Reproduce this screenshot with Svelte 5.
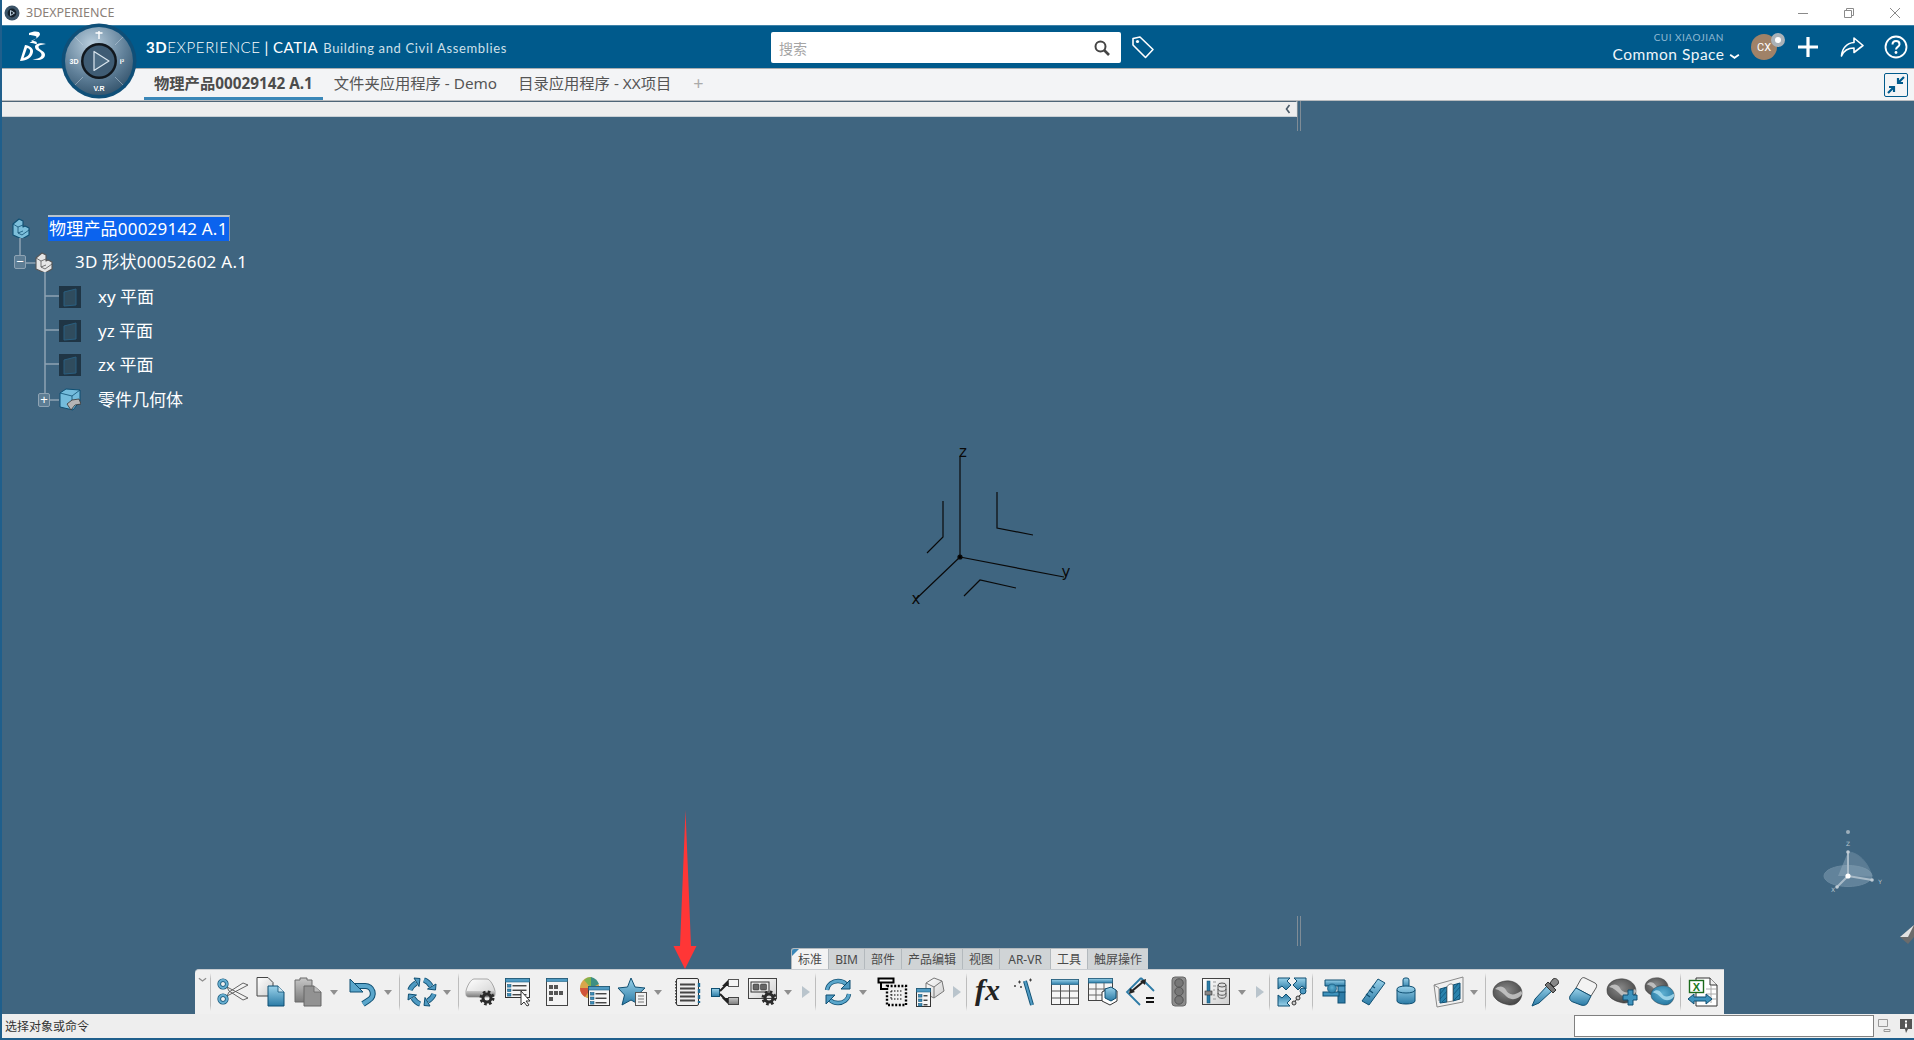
<script lang="ts">
	const treeRows = [
		{ label: 'xy 平面' },
		{ label: 'yz 平面' },
		{ label: 'zx 平面' }
	];
	const dockTabs = [
		{ label: '标准', cls: 'first' },
		{ label: 'BIM', cls: '' },
		{ label: '部件', cls: '' },
		{ label: '产品编辑', cls: '' },
		{ label: '视图', cls: '' },
		{ label: 'AR-VR', cls: 'wide' },
		{ label: '工具', cls: 'light' },
		{ label: '触屏操作', cls: '' }
	];
</script>

{#snippet dd()}
	<div class="dd"><i></i></div>
{/snippet}
{#snippet more()}
	<div class="more"><i></i></div>
{/snippet}
{#snippet gear(x, y)}
	<g transform="translate({x} {y})">
		<circle r="4" fill="none" stroke="#2b2b2b" stroke-width="3" />
		<circle r="6.2" fill="none" stroke="#2b2b2b" stroke-width="2.6" stroke-dasharray="2.6 2.27" />
	</g>
{/snippet}
{#snippet listwin(x, y, w, h)}
	<g transform="translate({x} {y})">
		<rect x=".5" y=".5" width={w} height={h} fill="#f6f6f6" stroke="#333" />
		<rect x=".5" y=".5" width={w} height="3.5" fill="#4f9ac2" stroke="#1d5f82" stroke-width=".6" />
		{#each [6.5, 11, 15.5] as ry}
			{#if ry < h - 1}
				<rect x="2.5" y={ry} width="3.5" height="2.6" fill="#3b8cb8" stroke="#0e4f72" stroke-width=".5" />
				<rect x="7.5" y={ry + 0.6} width={w - 10} height="1.3" fill="#333" />
			{/if}
		{/each}
	</g>
{/snippet}
{#snippet blob(x, y, fill, band)}
	<g transform="translate({x} {y})">
		<path d="M0 11C1 4 9 0 17 1c7 1 12 6 12 12 0 7-6 13-13 12-5-1-11-3-14-7-2-2-2-4-2-7z" fill={fill} stroke="#333" stroke-width=".5" />
		<path d="M2 9c4-4 9-3 11 1s7 7 15 1c1 1 1 2 1 3-3 5-10 7-15 3C10 13 7 10 2 9z" fill={band} opacity=".85" />
	</g>
{/snippet}
{#snippet lblock(face, edge)}
	<path d="M1 6l6-5 4 2v6l2-1 4 2v7l-7 4-9-4z" fill={face} stroke={edge} stroke-width="1.100" stroke-linejoin="round" />
	<path d="M1 6l5 3v6l4 2 7-5M6 9l5-2M6 15l5-2" fill="none" stroke={edge} stroke-width=".8" />
{/snippet}

<svg class="defs" width="0" height="0" aria-hidden="true">
	<defs>
		<linearGradient id="bl" x1="0" y1="0" x2="0" y2="1">
			<stop offset="0" stop-color="#9ad2ea" />
			<stop offset="1" stop-color="#2b7ba6" />
		</linearGradient>
		<linearGradient id="gr" x1="0" y1="0" x2="0" y2="1">
			<stop offset="0" stop-color="#c8c8c8" />
			<stop offset="1" stop-color="#7b7b7b" />
		</linearGradient>
		<linearGradient id="wh" x1="0" y1="0" x2="1" y2="1">
			<stop offset="0" stop-color="#fff" />
			<stop offset="1" stop-color="#cfcfcf" />
		</linearGradient>
		<radialGradient id="metal" cx=".4" cy=".25" r=".9">
			<stop offset="0" stop-color="#b9cedd" />
			<stop offset=".55" stop-color="#5f7f98" />
			<stop offset="1" stop-color="#24435b" />
		</radialGradient>
		<radialGradient id="blobg" cx=".45" cy=".4" r=".7">
			<stop offset="0" stop-color="#8a8a8a" />
			<stop offset="1" stop-color="#3e3e3e" />
		</radialGradient>
		<radialGradient id="blobb" cx=".5" cy=".4" r=".7">
			<stop offset="0" stop-color="#5fb0d2" />
			<stop offset="1" stop-color="#1d6f9a" />
		</radialGradient>
	</defs>
</svg>

<div class="app">
	<div class="titlebar">
		<svg class="appicon" viewBox="0 0 16 16" width="16" height="16">
			<circle cx="8" cy="8" r="7.5" fill="#3c5468" />
			<circle cx="8" cy="8" r="4.4" fill="#14202b" />
			<path d="M6.500 5.500v5l4-2.500z" fill="none" stroke="#b9cedd" />
		</svg>
		<span class="apptitle">3DEXPERIENCE</span>
		<div class="winbtns">
			<svg viewBox="0 0 12 12" width="12" height="12"><path d="M1 6.500h10" stroke="#8a8a8a" /></svg>
			<svg viewBox="0 0 12 12" width="12" height="12"><path d="M1.500 3.500h7v7h-7zM3.500 3.500v-2h7v7h-2" fill="none" stroke="#8a8a8a" /></svg>
			<svg viewBox="0 0 12 12" width="12" height="12"><path d="M1 1l10 10M11 1L1 11" stroke="#8a8a8a" /></svg>
		</div>
	</div>

	<header class="hdr">
		<svg class="ds" viewBox="0 0 30 32" width="30" height="32">
			<path d="M12 3c4-2 11-2.500 11 1 0 3-5 5-9 7 4-.5 7 .5 5.500 3.500-3-2-7-1.500-7-1.500 3-2 6-3.500 7-5.500 .5-2-4-2-7.500-2.500z" fill="#fff" />
			<path d="M8 15l-5 16c7 0 12-3.500 13-9 .5-4-3.500-6.500-8-7zM10 18c2.500 .5 3.500 2 3 4-.5 3-3 5-6.500 6z" fill="#fff" fill-rule="evenodd" />
			<path d="M29 14c-5-1.500-11-.5-11 3 0 4 7 4 6.500 8-.5 3-5 4.500-9 4 6 2.500 12 .5 12.500-4 .5-4-6.500-5-6.500-8 0-2 4-2.500 7.500-3z" fill="#fff" />
		</svg>
		<div class="brand">
			<b>3D</b><span class="thin">EXPERIENCE</span><span class="bar">|</span><span class="cat">CATIA</span>
			<span class="sub">Building and Civil Assemblies</span>
		</div>
		<div class="search">
			<span>搜索</span>
			<svg viewBox="0 0 18 18" width="18" height="18">
				<circle cx="7.500" cy="7.500" r="5" fill="none" stroke="#444" stroke-width="2" />
				<path d="M11 11l5 5" stroke="#444" stroke-width="2.600" />
			</svg>
		</div>
		<svg class="tag" viewBox="0 0 24 24" width="24" height="24">
			<path d="M2 3.500 9 2l13 12.500-7.500 8L2 10z" fill="none" stroke="#fff" stroke-width="1.600" stroke-linejoin="round" />
			<circle cx="6.500" cy="6.500" r="1.600" fill="#fff" />
		</svg>
		<div class="user">
			<div class="who">
				<span class="uname">CUI XIAOJIAN</span>
				<span class="space">Common Space
					<svg viewBox="0 0 12 8" width="11" height="7"><path d="M1 2l5 3.500L11 2" fill="none" stroke="#fff" stroke-width="2" /></svg>
				</span>
			</div>
			<div class="avatar">CX<i></i></div>
			<svg class="act plus" viewBox="0 0 22 22" width="22" height="22"><path d="M11 1v20M1 11h20" stroke="#fff" stroke-width="3.200" /></svg>
			<svg class="act" viewBox="0 0 24 22" width="24" height="22"><path d="M14 2l9 7.500-9 7v-4.500C8 12 4 14 1.500 20 2 12 7 7 14 6.500z" fill="none" stroke="#fff" stroke-width="1.600" stroke-linejoin="round" /></svg>
			<svg class="act" viewBox="0 0 24 24" width="24" height="24">
				<circle cx="12" cy="12" r="10.500" fill="none" stroke="#fff" stroke-width="1.800" />
				<path d="M8.500 9.500C8.500 7 10 6 12 6s3.500 1.200 3.500 3.200c0 2.800-3.500 2.600-3.500 5.300" fill="none" stroke="#fff" stroke-width="2" />
				<circle cx="12" cy="17.500" r="1.400" fill="#fff" />
			</svg>
		</div>
	</header>

	<svg class="compass" viewBox="0 0 76 76" width="76" height="76">
		<circle cx="38" cy="38" r="37.500" fill="#0f4f78" />
		<circle cx="38" cy="38" r="34" fill="url(#metal)" />
		<g stroke="#c7d6e2" stroke-width=".7" opacity=".7">
			<path d="M14 14l8 8M62 14l-8 8M14 62l8-8M62 62l-8-8" />
		</g>
		<circle cx="38" cy="38" r="18" fill="#11171d" />
		<circle cx="38" cy="38" r="15.500" fill="#3f5c74" />
		<path d="M33 28.500v19L48 38z" fill="#4e6d85" stroke="#dbe6ee" stroke-width="1.200" stroke-linejoin="round" />
		<text x="13" y="41" class="ct">3D</text>
		<text x="61" y="41" class="ct">i²</text>
		<text x="38" y="68" class="ct">V.R</text>
		<path d="M38 8v8M34.500 10h7" stroke="#fff" stroke-width="1.400" />
	</svg>

	<nav class="tabs">
		<span class="tab active">物理产品00029142 A.1</span>
		<span class="tab">文件夹应用程序 - Demo</span>
		<span class="tab">目录应用程序 - XX项目</span>
		<span class="add">+</span>
		<div class="collapse">
			<svg viewBox="0 0 20 20" width="20" height="20">
				<path d="M12 8l6-6M12 3v5h5M8 12l-6 6M3 12h5v5" fill="none" stroke="#005a8c" stroke-width="2.200" />
			</svg>
		</div>
	</nav>

	<main class="view">
		<div class="strip">
			<svg viewBox="0 0 8 10" width="8" height="10"><path d="M5.500 1L2.500 5l3 4" fill="none" stroke="#4a5a68" stroke-width="1.600" /></svg>
		</div>
		<i class="grip top"></i>
		<i class="grip low"></i>

		<svg class="links" width="60" height="200" viewBox="0 0 60 200">
			<g stroke="#8ea3b3" stroke-width="1.500" fill="none">
				<path d="M18 20v19M24 45h11M43 54v121M43 78h14M43 112h14M43 146h14M48 182h9" />
			</g>
		</svg>

		<div class="tree">
			<div class="row lv0">
				<svg class="node" viewBox="0 0 18 20" width="18" height="20">
					{@render lblock('#7dbfdb', '#0f4f72')}
				</svg>
				<span class="sel">物理产品00029142 A.1</span>
			</div>
			<div class="row lv1">
				<span class="box">−</span>
				<svg class="node" viewBox="0 0 18 20" width="18" height="20">
					{@render lblock('#e6e6e6', '#555')}
				</svg>
				<span class="txt">3D 形状00052602 A.1</span>
			</div>
			{#each treeRows as r}
				<div class="row lv2">
					<svg class="plane" viewBox="0 0 22 22" width="22" height="22">
						<rect width="22" height="22" fill="#1f3545" />
						<path d="M5 6l12-3v16l-12 1z" fill="#2f4c5e" stroke="#2a5f80" />
					</svg>
					<span class="txt">{r.label}</span>
				</div>
			{/each}
			<div class="row lv3">
				<span class="box">+</span>
				<svg class="plane" viewBox="0 0 22 24" width="22" height="24">
					<path d="M1 5l6-4 14 1v11l-7 9-13-3z" fill="#74bcdc" stroke="#0f4f72" />
					<path d="M1 5l12 3 8-6M13 8v14" fill="none" stroke="#0f4f72" stroke-width=".8" />
					<path d="M8 16l5-4 7-1 2 5-6 1-4 5z" fill="#b5b5b5" stroke="#333" stroke-width=".8" />
				</svg>
				<span class="txt">零件几何体</span>
			</div>
		</div>

		<svg class="axis" viewBox="0 0 170 170" width="170" height="170">
			<g fill="none" stroke="#0a0a0a" stroke-width="1.200" transform="translate(-900 -440)">
				<path d="M960 557V456M960 557l-44 42M960 557l104 20" />
				<path d="M943 501v36l-16 16M997 492v36l36 7M964 596l16-16 36 8" />
				<circle cx="960" cy="557" r="2" fill="#000" />
			</g>
			<text x="63" y="17" class="al">z</text>
			<text x="166" y="137" class="al">y</text>
			<text x="16" y="164" class="al">x</text>
		</svg>

		<svg class="triad" viewBox="0 0 60 70" width="60" height="70">
			<ellipse cx="30" cy="47" rx="24" ry="10.500" fill="#7f9db2" opacity=".55" stroke="#8aa5b8" />
			<path d="M30 23c10 0 20 10 24 24l-24 0z" fill="#8fa9bb" opacity=".35" stroke="#8aa5b8" />
			<path d="M30 23l-10 24h10z" fill="#98b0c0" opacity=".45" />
			<path d="M30 47V23M30 47l24 4M30 47l-11 11" stroke="#a9bbc8" stroke-width="2" fill="none" />
			<circle cx="30" cy="3" r="2" fill="#9eafbb" />
			<circle cx="30" cy="23" r="1.800" fill="#c0ccd5" />
			<circle cx="54" cy="51" r="1.800" fill="#c0ccd5" />
			<circle cx="19" cy="58" r="1.800" fill="#c0ccd5" />
			<circle cx="30" cy="47" r="2.600" fill="#fff" />
			<text x="30" y="17" class="tl">Z</text>
			<text x="62" y="55" class="tl">Y</text>
			<text x="15" y="63" class="tl">X</text>
		</svg>

		<svg class="pointer" viewBox="0 0 14 20" width="14" height="20">
			<path d="M0 12L14 0v12l-6 7z" fill="#6b6b6b" />
			<path d="M0 12L14 0 8 12z" fill="#e2e2e2" />
		</svg>

		<svg class="redarrow" viewBox="0 0 24 160" width="24" height="160">
			<path d="M7 136L12.500 0 18 136h5.500L12 159 .5 136z" fill="#ff3636" />
		</svg>

		<div class="dock">
			<div class="docktabs">
				{#each dockTabs as t}
					<span class="dtab {t.cls}">{t.label}</span>
				{/each}
			</div>
			<div class="toolbar">
				<div class="handle">
					<svg viewBox="0 0 10 6" width="9" height="6"><path d="M1 1l4 3 4-3" fill="none" stroke="#8d8d8d" stroke-width="1.400" /></svg>
				</div>
				<div class="sep"></div>

				<div class="b"><svg viewBox="0 0 30 30">
					<path d="M9 10L30 21l-5 2-14-9zM9 19L30 8l-5-2-14 9z" fill="#f3f3f3" stroke="#555" stroke-width=".9" />
					<circle cx="5" cy="7" r="3.800" fill="none" stroke="#0f4f72" stroke-width="3.600" />
					<circle cx="5" cy="7" r="3.800" fill="none" stroke="#66aed0" stroke-width="2.200" />
					<circle cx="5" cy="22" r="3.800" fill="none" stroke="#0f4f72" stroke-width="3.600" />
					<circle cx="5" cy="22" r="3.800" fill="none" stroke="#66aed0" stroke-width="2.200" />
				</svg></div>
				<div class="b"><svg viewBox="0 0 30 30">
					<path d="M1 .500h11l5 5V19H1z" fill="url(#wh)" stroke="#444" />
					<path d="M12 9h10l6 6v14H12z" fill="url(#bl)" stroke="#0f4f72" />
					<path d="M22 9v6h6" fill="#cfe8f3" stroke="#0f4f72" stroke-width=".8" />
				</svg></div>
				<div class="b"><svg viewBox="0 0 30 30">
					<path d="M1 3h5V1h7v2h5v22H1z" fill="url(#gr)" stroke="#6b6b6b" />
					<path d="M10 9h10l7 6v14H10z" fill="#929292" stroke="#666" />
					<path d="M20 9v6h7" fill="#bdbdbd" stroke="#666" stroke-width=".8" />
				</svg></div>
				{@render dd()}
				<div class="b"><svg viewBox="0 0 30 30">
					<path d="M3 9h14a7.500 7.500 0 0 1 4 14l-6 4" fill="none" stroke="#0f4f72" stroke-width="6" />
					<path d="M3 9h14a7.500 7.500 0 0 1 4 14l-6 4" fill="none" stroke="#5aa6cb" stroke-width="4" />
					<path d="M2 2v13h13z" fill="#5aa6cb" stroke="#0f4f72" />
				</svg></div>
				{@render dd()}
				<div class="sep"></div>

				<div class="b"><svg viewBox="0 0 30 30">
					{#each [0, 90, 180, 270] as a}
						<g transform="rotate({a} 15 15)">
							<path d="M3 13C4 10 6 8 9 6" fill="none" stroke="#0f4f72" stroke-width="5.400" />
							<path d="M3 13C4 10 6 8 9 6" fill="none" stroke="#4f9ac2" stroke-width="3.600" />
							<path d="M7 1l6 .500-1 8z" fill="#4f9ac2" stroke="#0f4f72" stroke-linejoin="round" />
						</g>
					{/each}
				</svg></div>
				{@render dd()}
				<div class="sep"></div>

				<div class="b"><svg viewBox="0 0 30 30">
					<path d="M8 2h13c3 0 7 7 8 12v3c0 2-1 3-3 3H3c-2 0-3-1-3-3v-3C1 9 5 2 8 2z" fill="url(#wh)" stroke="#777" stroke-width=".6" />
					<path d="M0 14h29v3c0 2-1 3-3 3H3c-2 0-3-1-3-3z" fill="url(#gr)" />
					{@render gear(21, 21)}
				</svg></div>
				<div class="b"><svg viewBox="0 0 30 30">
					{@render listwin(1, 1, 24, 19)}
					<path d="M17 14v14l3-3 3 4 2-1-3-4h4z" fill="#fff" stroke="#333" stroke-width="1" stroke-linejoin="round" />
				</svg></div>
				<div class="b"><svg viewBox="0 0 30 30">
					<rect x="4.500" y="1.500" width="21" height="27" fill="#f4f4f4" stroke="#444" />
					<rect x="4.500" y="1.500" width="21" height="3" fill="#4f9ac2" stroke="#1d5f82" stroke-width=".6" />
					{#each [[7, 8], [12, 8], [7, 14], [12, 14], [17, 14], [7, 20]] as c}
						<rect x={c[0]} y={c[1]} width="4" height="4" fill="#555" />
					{/each}
				</svg></div>
				<div class="b"><svg viewBox="0 0 30 30">
					<path d="M11 0a11 11 0 0 0-11 11 11 11 0 0 0 7 10h12V8z" fill="#d9a64a" />
					<path d="M11 0a11 11 0 0 0-7 3l7 8z" fill="#7fb24f" />
					<path d="M11 0l0 11 8-4a11 11 0 0 0-8-7z" fill="#3d8f83" />
					<path d="M0 11h11l-6 9a11 11 0 0 1-5-9z" fill="#d1553b" />
					{@render listwin(8, 9, 21, 19)}
				</svg></div>
				<div class="b"><svg viewBox="0 0 30 30">
					<path d="M13 1l4 9 10 1-7.500 7L22 28l-9-5-9 5 2.500-10L0 11l9.500-1z" fill="url(#bl)" stroke="#0f4f72" stroke-linejoin="round" />
					<rect x="17.500" y="15.500" width="11" height="13" fill="#f2f2f2" stroke="#555" />
					<path d="M20 19h6M20 22h6M20 25h6" stroke="#777" />
				</svg></div>
				{@render dd()}
				<div class="b"><svg viewBox="0 0 30 30">
					<rect x="4.500" y="1.500" width="22" height="27" rx="1.500" fill="#efefef" stroke="#333" />
					<path d="M8 7.500h15M8 11.500h15M8 15.500h15M8 19.500h15M8 23.500h15" stroke="#444" stroke-width="1.800" />
					<path d="M27 6v4M27 12v4M27 18v4M27 24v2" stroke="#1d6b95" stroke-width="2.400" />
					<path d="M4 4v23" stroke="#333" stroke-dasharray="1.500 1.500" stroke-width="1.600" />
				</svg></div>
				<div class="b"><svg viewBox="0 0 30 30">
					<rect x="1.500" y="11.500" width="8" height="8" fill="url(#bl)" stroke="#0f4f72" />
					<rect x="18.500" y="2.500" width="10" height="7" fill="#f6f6f6" stroke="#555" />
					<rect x="18.500" y="20.500" width="10" height="7" fill="url(#gr)" stroke="#444" />
					<path d="M10 14l8-8M10 17l8 8" stroke="#222" stroke-width="2" />
					<path d="M18 3v6h-6zM18 27v-6h-6z" fill="#222" />
				</svg></div>
				<div class="b"><svg viewBox="0 0 30 30">
					<rect x=".500" y="1.500" width="28" height="20" fill="url(#wh)" stroke="#444" />
					<rect x="3" y="5" width="18" height="10" fill="none" stroke="#333" />
					<rect x="5" y="7" width="6" height="6" rx="1" fill="#666" stroke="#222" stroke-width=".5" />
					<rect x="12.500" y="7" width="6" height="6" rx="1" fill="#666" stroke="#222" stroke-width=".5" />
					{@render gear(21, 21)}
				</svg></div>
				{@render dd()}
				{@render more()}
				<div class="sep"></div>

				<div class="b"><svg viewBox="0 0 30 30">
					<path d="M4 13c1-6 6-9 11-9 3 0 6 1 8 3" fill="none" stroke="#0f4f72" stroke-width="4.400" />
					<path d="M4 13c1-6 6-9 11-9 3 0 6 1 8 3" fill="none" stroke="#5aa6cb" stroke-width="2.800" />
					<path d="M26 17c-1 6-6 9-11 9-3 0-6-1-8-3" fill="none" stroke="#0f4f72" stroke-width="4.400" />
					<path d="M26 17c-1 6-6 9-11 9-3 0-6-1-8-3" fill="none" stroke="#5aa6cb" stroke-width="2.800" />
					<path d="M27 3v9h-9zM3 27v-9h9z" fill="#4f9ac2" stroke="#0f4f72" />
				</svg></div>
				{@render dd()}
				<div class="b"><svg viewBox="0 0 30 30">
					<rect x="1.500" y="1.500" width="15" height="4" fill="#fff" stroke="#000" stroke-width="2" />
					<path d="M4 6v6h6" fill="none" stroke="#000" stroke-width="2" />
					<rect x="10" y="9" width="19" height="19" fill="none" stroke="#000" stroke-width="2.400" stroke-dasharray="2 1.600" />
					<path d="M14 14h11M14 18h11M14 22h11M14 14v9" stroke="#000" stroke-dasharray="1.500 1.500" fill="none" />
				</svg></div>
				<div class="b"><svg viewBox="0 0 30 30">
					<path d="M11 6l8-5 8 3 2 10-10 7-8-4z" fill="url(#wh)" stroke="#777" />
					<path d="M11 6l8 4 8-6M19 10v11" fill="none" stroke="#777" />
					{@render listwin(1, 11, 14, 18)}
				</svg></div>
				{@render more()}
				<div class="sep"></div>

				<div class="b"><svg viewBox="0 0 30 30"><text x="1" y="23" class="fx">fx</text></svg></div>
				<div class="b wand"><svg viewBox="0 0 30 30">
					<path d="M16 4l7 24" stroke="#0f4f72" stroke-width="4" />
					<path d="M16 4l7 24" stroke="#4f9ac2" stroke-width="2.200" />
					<path d="M9 5h3M10.500 3.500v3M20 3h3M21.500 1.500v3M5 9h2M6 8v2M11 10h2M12 9v2" stroke="#333" stroke-width=".9" />
				</svg></div>
				<div class="b"><svg viewBox="0 0 30 30">
					<rect x="1.500" y="2.500" width="27" height="25" fill="#f5f5f5" stroke="#444" />
					<rect x="1.500" y="2.500" width="27" height="5" fill="url(#bl)" stroke="#1d5f82" stroke-width=".7" />
					<path d="M10.500 8v19M19.500 8v19M2 14h26M2 21h26" stroke="#555" />
				</svg></div>
				<div class="b"><svg viewBox="0 0 30 30">
					<rect x=".500" y="1.500" width="24" height="22" fill="#f5f5f5" stroke="#444" />
					<rect x=".500" y="1.500" width="24" height="4.500" fill="url(#bl)" stroke="#1d5f82" stroke-width=".7" />
					<path d="M8 6v17M16 6v17M1 12h23M1 18h23" stroke="#666" />
					<path d="M14 15l8-4 7 3v10l-7 4-8-4z" fill="#fff" stroke="#333" />
					<path d="M17 12l6-2 5 3v8l-5 3-6-3z" fill="url(#bl)" stroke="#0f4f72" />
				</svg></div>
				<div class="b"><svg viewBox="0 0 30 30">
					<path d="M15 1L1 15l13 13M15 1l13 13" fill="none" stroke="#2d7ba6" stroke-width="1.800" />
					<path d="M6 14L18 4" stroke="#222" stroke-width="2.200" />
					<path d="M20 2l-1 6-5-4zM3 17l1-6 5 4z" fill="#222" />
					<path d="M20 21h8M20 25h8" stroke="#111" stroke-width="2.200" />
				</svg></div>
				<div class="b"><svg viewBox="0 0 30 30">
					<rect x="8" y="0" width="14" height="29" rx="3" fill="#8c8c8c" stroke="#666" />
					<circle cx="15" cy="6" r="4.200" fill="#777" stroke="#555" />
					<circle cx="15" cy="14.500" r="4.200" fill="#777" stroke="#555" />
					<circle cx="15" cy="23" r="4.200" fill="#777" stroke="#555" />
				</svg></div>
				<div class="b"><svg viewBox="0 0 30 30">
					<rect x=".500" y="1.500" width="27" height="26" fill="url(#wh)" stroke="#444" />
					<rect x="5" y="4" width="3" height="22" fill="#2d7ba6" stroke="#0f4f72" stroke-width=".5" />
					<rect x="3" y="14" width="7" height="4" fill="#888" stroke="#333" stroke-width=".6" />
					<path d="M11 5h3M11 9h3M11 13h2M11 18h2M11 22h3" stroke="#999" />
					<ellipse cx="20" cy="8" rx="4" ry="2" fill="#ddd" stroke="#555" />
					<path d="M16 8v11c0 3 8 3 8 0V8M16 12c0 3 8 3 8 0M16 16c0 3 8 3 8 0" fill="none" stroke="#555" />
				</svg></div>
				{@render dd()}
				{@render more()}
				<div class="sep"></div>

				<div class="b"><svg viewBox="0 0 30 30">
					<path id="fastarrow" d="M1 1h12l-3 3 4 4-5 5-4-4-4 3z" fill="url(#bl)" stroke="#0f4f72" stroke-linejoin="round" />
					<path transform="translate(30 0) scale(-1 1)" d="M1 1h12l-3 3 4 4-5 5-4-4-4 3z" fill="url(#bl)" stroke="#0f4f72" stroke-linejoin="round" />
					<path transform="translate(0 30) scale(1 -1)" d="M1 1h12l-3 3 4 4-5 5-4-4-4 3z" fill="url(#bl)" stroke="#0f4f72" stroke-linejoin="round" />
					<path d="M17 26l4-6 6-6" stroke="#444" />
					<circle cx="26" cy="14" r="3" fill="#4f9ac2" stroke="#0f4f72" />
					<circle cx="21" cy="21" r="2" fill="#ccc" stroke="#333" />
					<circle cx="17" cy="26" r="2" fill="#ccc" stroke="#333" />
				</svg></div>
				<div class="sep"></div>

				<div class="b"><svg viewBox="0 0 30 30">
					<rect x="18" y="15" width="7" height="11" fill="#2d7ba6" stroke="#0f4f72" />
					<path d="M5 3h20v6h-20z" fill="url(#bl)" stroke="#0f4f72" />
					<rect x="18" y="9" width="7" height="6" fill="#4f9ac2" stroke="#0f4f72" />
					<rect x="3" y="15" width="16" height="4" fill="#3f93bd" stroke="#0f4f72" />
					<circle cx="12" cy="11.500" r="4.500" fill="url(#blobb)" stroke="#0f4f72" stroke-width=".6" />
				</svg></div>
				<div class="b"><svg viewBox="0 0 30 30">
					<path d="M20 2l7 4-16 22-7-4z" fill="url(#bl)" stroke="#0f4f72" />
					<path d="M11 13l4 3M14 9l3 2M8 17l4 3" stroke="#0f4f72" stroke-width="1.200" />
				</svg></div>
				<div class="b cyl"><svg viewBox="0 0 30 30">
					<rect x="12" y="1" width="6" height="10" rx="2" fill="url(#bl)" stroke="#0f4f72" />
					<path d="M6 12c0-4 18-4 18 0v12c0 4-18 4-18 0z" fill="url(#bl)" stroke="#0f4f72" />
					<path d="M6 13c0 4 18 4 18 0" fill="none" stroke="#0f4f72" />
				</svg></div>
				<div class="b"><svg viewBox="0 0 30 30">
					<path d="M0 8l29-8v25L3 30z" fill="none" stroke="#8a8a8a" stroke-width="1" />
					<path d="M0 8l5 3v13" fill="none" stroke="#8a8a8a" />
					<path d="M6 12l7-2v15l-7 1zM19 8l7-2v16l-7 2z" fill="#2b83ad" stroke="#0f4f72" />
					<path d="M6 17l5-6M6 22l7-8M8 25l5-5M19 13l5-6M19 18l7-8M20 23l6-6" stroke="#0f4f72" stroke-width=".7" />
					<path d="M13 10c1-3 5-4 6-2v16l-6 1z" fill="#fff" stroke="#555" stroke-width=".7" />
				</svg></div>
				{@render dd()}
				<div class="sep"></div>

				<div class="b"><svg viewBox="0 0 30 30">{@render blob(0, 3, 'url(#blobg)', '#c9c9c9')}</svg></div>
				<div class="b"><svg viewBox="0 0 30 30">
					<path d="M1 29l3-7L17 8l5 5-14 13z" fill="url(#bl)" stroke="#0f4f72" />
					<path d="M14 8l8 8 3-3-8-8z" fill="#777" stroke="#333" />
					<path d="M19 6l3-4c3-2 7 2 5 5l-4 3z" fill="#888" stroke="#333" />
				</svg></div>
				<div class="b"><svg viewBox="0 0 30 30">
					<path d="M16 1l10 5c2 1 2 3 1 5l-5 8-15-8 5-9c1-1 2-2 4-1z" fill="#f3f3f3" stroke="#333" stroke-width=".8" />
					<path d="M7 11l15 8-3 6c-1 3-4 4-7 3l-8-3c-3-1-4-3-3-6z" fill="url(#bl)" stroke="#0f4f72" />
				</svg></div>
				<div class="b"><svg viewBox="0 0 30 30">
					{@render blob(0, 1, 'url(#blobg)', '#c9c9c9')}
					<path d="M21 13h5v5h4v5h-4v5h-5v-5h-5v-5h5z" fill="#3f93bd" stroke="#0f4f72" />
				</svg></div>
				<div class="b"><svg viewBox="0 0 30 30">
					<g transform="scale(.8)">{@render blob(0, 0, 'url(#blobg)', '#c9c9c9')}</g>
					<g transform="translate(6 8) scale(.8)">{@render blob(0, 0, 'url(#blobb)', '#a8dcef')}</g>
				</svg></div>
				<div class="sep"></div>

				<div class="b"><svg viewBox="0 0 30 30">
					<path d="M8 1h14l7 7v21H8z" fill="#fff" stroke="#333" />
					<path d="M22 1v7h7" fill="#eee" stroke="#333" />
					<path d="M18 12h10M18 17h10M18 22h10M23 9v17" stroke="#aaa" />
					<rect x="1.500" y="3.500" width="14" height="12" fill="#fff" stroke="#1c6b1c" stroke-width="1.400" />
					<text x="8.500" y="14" class="xl">X</text>
					<path d="M0 22l6-5v3h12v-3l6 5-6 5v-3H6v3z" fill="#3f93bd" stroke="#0f4f72" />
				</svg></div>
			</div>
		</div>
	</main>

	<footer class="status">
		<span class="msg">选择对象或命令</span>
		<div class="cmd"></div>
		<svg viewBox="0 0 14 14" width="14" height="14"><path d="M.5.500h9v7h-9zM6 10.500h6v2H6z" fill="none" stroke="#999" /></svg>
		<svg viewBox="0 0 14 16" width="14" height="16"><path d="M1 1h12v10H9l-2 4-1-4H1z" fill="#555" /><rect x="6" y="2.500" width="2" height="2" fill="#fff" /><rect x="6" y="5.500" width="2" height="4" fill="#fff" /></svg>
	</footer>
</div>

<style>
	:global(body) {
		margin: 0;
		overflow: hidden;
	}

	.defs {
		position: absolute;
	}

	.app {
		position: relative;
		display: flex;
		flex-direction: column;
		width: 1914px;
		height: 1040px;
		box-sizing: border-box;
		border-left: 2px solid #1f5f8c;
		border-bottom: 2px solid #1f5f8c;
		font-family: 'Noto Sans', 'Noto Sans CJK SC', sans-serif;
		overflow: hidden;
	}

	.titlebar {
		display: flex;
		align-items: center;
		height: 25px;
		flex: none;
		background: #fff;
	}

	.appicon {
		margin-left: 2px;
	}

	.apptitle {
		margin-left: 6px;
		font-size: 12.500px;
		color: #8a8078;
	}

	.winbtns {
		display: flex;
		gap: 34px;
		margin-left: auto;
		margin-right: 13px;
	}

	.hdr {
		display: flex;
		align-items: center;
		height: 43px;
		flex: none;
		background: #005a8c;
		border-top: 1px solid #3e82a8;
		box-sizing: border-box;
		color: #fff;
	}

	.ds {
		margin-left: 15px;
		margin-top: -2px;
		flex: none;
	}

	.brand {
		width: 625px;
		margin-left: 99px;
		margin-top: -1px;
		flex: none;
		font-family: Lato, 'Noto Sans', sans-serif;
		font-size: 15px;
		letter-spacing: 0.6px;
		white-space: nowrap;
	}

	.brand b {
		font-weight: 700;
	}

	.thin {
		font-weight: 300;
	}

	.bar {
		margin: 0 4px;
	}

	.cat {
		font-weight: 400;
	}

	.sub {
		margin-left: 1px;
		font-size: 13px;
		color: #cfe0ea;
		letter-spacing: 0.65px;
	}

	.search {
		display: flex;
		align-items: center;
		justify-content: space-between;
		width: 350px;
		height: 31px;
		flex: none;
		box-sizing: border-box;
		padding: 0 10px 0 8px;
		background: #fff;
		border-radius: 2px;
		font-size: 14px;
		color: #a5a5a5;
		margin-top: 1px;
	}

	.tag {
		margin-left: 10px;
		flex: none;
	}

	.user {
		display: flex;
		align-items: center;
		margin-left: auto;
	}

	.who {
		display: flex;
		flex-direction: column;
		align-items: flex-end;
		font-family: Lato, 'Noto Sans', sans-serif;
	}

	.uname {
		font-size: 10px;
		line-height: 13px;
		letter-spacing: 0.5px;
		color: #8fb9d3;
		margin-right: 16px;
	}

	.space {
		margin-top: 1px;
		font-size: 15.500px;
		line-height: 19px;
		letter-spacing: 0.5px;
		color: #eef5fa;
	}

	.avatar {
		position: relative;
		display: flex;
		align-items: center;
		justify-content: center;
		width: 26px;
		height: 26px;
		margin-left: 11px;
		border-radius: 50%;
		background: #a08268;
		font-family: Roboto, sans-serif;
		font-size: 11px;
	}

	.avatar i {
		position: absolute;
		top: -1px;
		right: -8px;
		width: 6px;
		height: 6px;
		border: 4px solid #aab2b8;
		border-radius: 50%;
		background: #fff;
	}

	.act {
		margin-left: 20px;
		flex: none;
	}

	.act.plus {
		margin-right: 1px;
	}

	.act:last-child {
		margin-right: 6px;
	}

	.compass {
		position: absolute;
		left: 59px;
		top: 23px;
	}

	.ct {
		font-family: 'Liberation Sans', sans-serif;
		font-size: 7px;
		font-weight: 700;
		fill: #fff;
		text-anchor: middle;
	}

	.tabs {
		display: flex;
		align-items: stretch;
		height: 33px;
		flex: none;
		box-sizing: border-box;
		padding-left: 142px;
		background: #f3f4f6;
		border-top: 1px solid #a9adb0;
		border-bottom: 1px solid #b9bcbf;
		font-size: 15.300px;
		color: #555;
	}

	.tab {
		display: flex;
		align-items: center;
		padding: 0 10px 5px;
		margin-right: 1px;
		white-space: nowrap;
	}

	.tab.active {
		font-weight: 700;
		color: #4c4c4c;
		border-bottom: 3px solid #3a87b8;
		padding-bottom: 2px;
	}

	.add {
		display: flex;
		align-items: center;
		margin-left: 11px;
		padding-bottom: 4px;
		font-size: 18px;
		color: #aaa;
	}

	.collapse {
		display: flex;
		align-items: center;
		justify-content: center;
		width: 22px;
		height: 22px;
		margin: 4px 6px 0 auto;
		border: 1px solid #005a8c;
		border-radius: 2px;
	}

	.view {
		position: relative;
		flex: 1;
		background: #3f6580;
		overflow: hidden;
	}

	.strip {
		display: flex;
		align-items: center;
		justify-content: flex-end;
		width: 1295px;
		height: 16px;
		padding-right: 4px;
		box-sizing: border-box;
		background: #eee;
		border-top: 1px solid #4f6577;
		border-right: 1px solid #e4e8ea;
		border-bottom: 1px solid #c9d0d5;
	}

	.grip {
		position: absolute;
		left: 1295px;
		width: 2px;
		height: 30px;
		border-left: 1px solid #7f8c96;
		border-right: 1px solid #7f8c96;
	}

	.grip.top {
		top: 0;
	}

	.grip.low {
		top: 815px;
	}

	.links {
		position: absolute;
		left: 0;
		top: 117px;
	}

	.tree {
		position: relative;
		margin-top: 94px;
		font-size: 17px;
		color: #fff;
		line-height: 24px;
	}

	.row {
		display: flex;
		align-items: center;
		height: 34.300px;
		white-space: nowrap;
	}

	.lv0 {
		padding-left: 10px;
	}

	.lv0 .sel {
		margin-left: 18px;
		padding: 0 1px;
		background: #0b63ee;
		border-top: 2px solid #b9c4cc;
		border-right: 1px solid #8c98a2;
		height: 24px;
		letter-spacing: 0.2px;
	}

	.lv1 {
		padding-left: 12px;
	}

	.lv1 .node {
		margin-left: 9px;
	}

	.lv1 .txt {
		margin-left: 22px;
		letter-spacing: 0.25px;
	}

	.lv2 {
		padding-left: 57px;
	}

	.lv2 .txt,
	.lv3 .txt {
		margin-left: 17px;
	}

	.lv3 {
		padding-left: 36px;
	}

	.lv3 .plane {
		margin-left: 9px;
	}

	.box {
		display: flex;
		align-items: center;
		justify-content: center;
		width: 10px;
		height: 12px;
		border: 1px solid #8ea3b3;
		border-radius: 2px;
		background: #5d7d94;
		font-family: 'Liberation Sans', sans-serif;
		font-size: 13px;
		line-height: 12px;
	}

	.node,
	.plane {
		flex: none;
	}

	.axis {
		position: absolute;
		left: 898px;
		top: 339px;
	}

	.al {
		font-family: 'DejaVu Sans', sans-serif;
		font-size: 15px;
		fill: #0a0a0a;
		text-anchor: middle;
	}

	.triad {
		position: absolute;
		left: 1816px;
		top: 728px;
		overflow: visible;
	}

	.tl {
		font-family: 'DejaVu Sans', sans-serif;
		font-size: 6px;
		fill: #b7c6d1;
		text-anchor: middle;
	}

	.pointer {
		position: absolute;
		right: 0;
		top: 824px;
	}

	.redarrow {
		position: absolute;
		left: 671px;
		top: 709px;
	}

	.dock {
		position: absolute;
		left: 193px;
		bottom: 0;
		display: flex;
		flex-direction: column;
		align-items: flex-start;
	}

	.docktabs {
		display: flex;
		margin-left: 596px;
		height: 21px;
	}

	.dtab {
		display: flex;
		align-items: center;
		justify-content: center;
		min-width: 36px;
		box-sizing: border-box;
		padding: 0 6px;
		background: #d0d4d6;
		border-left: 1px solid #b3b9bd;
		border-top: 1px solid #b3b9bd;
		font-size: 12px;
		color: #4a4a4a;
		white-space: nowrap;
	}

	.dtab.wide {
		min-width: 51px;
	}

	.dtab.first {
		position: relative;
		background: #f3f3f3;
		border-radius: 3px 0 0 0;
		overflow: hidden;
	}

	.dtab.first::before {
		content: '';
		position: absolute;
		left: 0;
		top: 0;
		border-top: 7px solid #3a87b8;
		border-right: 7px solid transparent;
	}

	.dtab.light {
		background: #ebebeb;
	}

	.toolbar {
		display: flex;
		align-items: center;
		height: 45px;
		box-sizing: border-box;
		width: 1529px;
		background: #f0f0f0;
		border-top: 1px solid #c8ccd0;
		border-radius: 4px 0 0 0;
	}

	.handle {
		display: flex;
		justify-content: center;
		width: 14px;
		align-self: flex-start;
		padding-top: 7px;
	}

	.sep {
		flex: none;
		width: 1px;
		height: 38px;
		margin: 0 3px 0 1px;
		background: linear-gradient(#f0f0f0, #bdbdbd 15%, #bdbdbd 85%, #f0f0f0);
	}

	.b {
		display: flex;
		align-items: center;
		justify-content: center;
		width: 38px;
		height: 30px;
		flex: none;
	}

	.b svg {
		width: 30px;
		height: 30px;
		overflow: visible;
	}

	.wand svg {
		margin-left: -6px;
	}

	.cyl svg {
		margin-left: -10px;
	}

	.dd {
		display: flex;
		align-items: center;
		width: 16px;
		flex: none;
		padding-left: 2px;
		box-sizing: border-box;
	}

	.dd i {
		border-top: 5px solid #8f8f8f;
		border-left: 4px solid transparent;
		border-right: 4px solid transparent;
	}

	.more {
		display: flex;
		justify-content: center;
		width: 16px;
		flex: none;
	}

	.more i {
		border-left: 8px solid #b9c4cc;
		border-top: 6px solid transparent;
		border-bottom: 6px solid transparent;
	}

	.fx {
		font-family: 'Liberation Serif', serif;
		font-style: italic;
		font-weight: 700;
		font-size: 30px;
		fill: #222;
	}

	.xl {
		font-family: 'Liberation Sans', sans-serif;
		font-weight: 700;
		font-size: 11px;
		fill: #1c7a1c;
		text-anchor: middle;
	}

	.status {
		display: flex;
		align-items: center;
		height: 24px;
		flex: none;
		background: #eee;
		box-sizing: border-box;
		padding-right: 1px;
	}

	.msg {
		margin-left: 3px;
		font-size: 12px;
		color: #333;
	}

	.cmd {
		width: 300px;
		height: 22px;
		margin-left: auto;
		margin-right: 4px;
		box-sizing: border-box;
		background: #fff;
		border: 1px solid #808080;
	}

	.status svg {
		flex: none;
	}

	.status svg:last-child {
		margin-left: 7px;
	}
</style>
